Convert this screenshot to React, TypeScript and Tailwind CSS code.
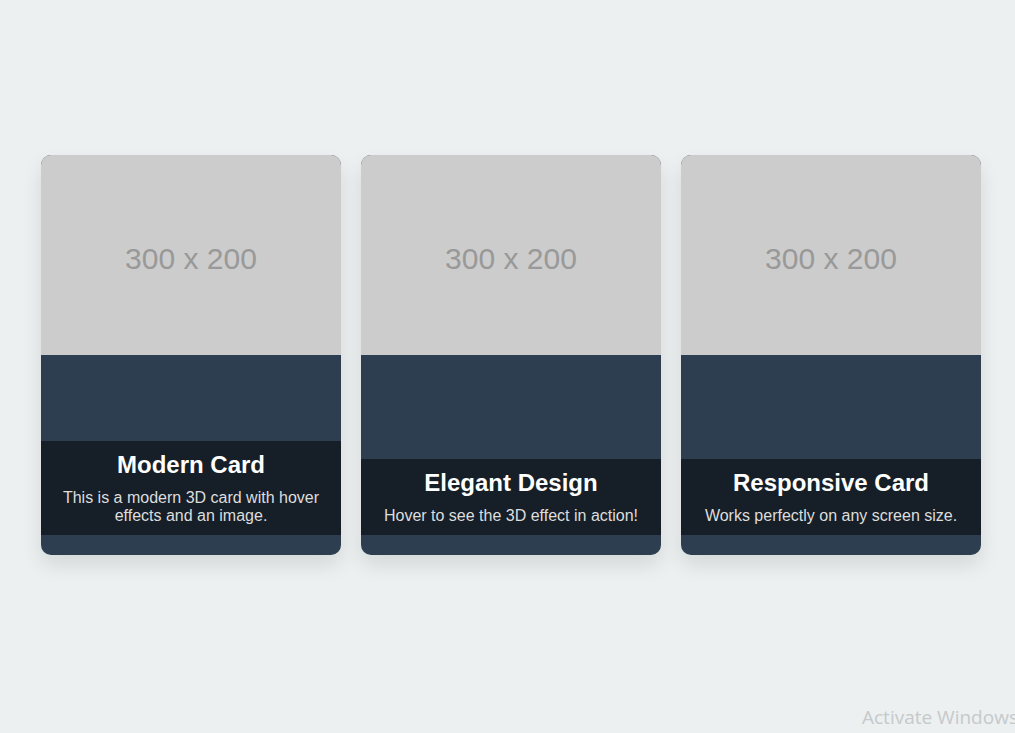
const cards = [
  { title: 'Modern Card', text: 'This is a modern 3D card with hover effects and an image.' },
  { title: 'Elegant Design', text: 'Hover to see the 3D effect in action!' },
  { title: 'Responsive Card', text: 'Works perfectly on any screen size.' },
]

export default function App() {
  return (
    <div
      className="relative h-[733px] overflow-hidden bg-[#ecf0f1]"
      style={{ fontFamily: '"Liberation Sans", Arial, sans-serif' }}
    >
      <div className="flex gap-5 pl-[41px] pt-[155px]">
        {cards.map(card => (
          <div
            key={card.title}
            className="relative h-[400px] w-[300px] overflow-hidden rounded-[10px] bg-[#2c3e50] shadow-[0_10px_20px_rgba(0,0,0,0.1)]"
          >
            <div className="flex h-[200px] items-center justify-center bg-[#cccccc] pt-[6px] text-[30px] text-[#999999]">
              300 x 200
            </div>
            <div className="absolute bottom-[20px] left-0 right-0 bg-[rgba(0,0,0,0.5)] px-[10px] pb-[10px] pt-[10px] text-center">
              <h2 className="mb-[10px] text-[24px] font-bold leading-[28px] text-white">{card.title}</h2>
              <p className="text-[16px] leading-[18px] text-[#dddddd]">{card.text}</p>
            </div>
          </div>
        ))}
      </div>
      <div
        className="absolute left-[862px] top-[703px] whitespace-nowrap text-[19px] text-[#c6c9cb]"
        style={{ fontFamily: '"Open Sans", "Noto Sans", sans-serif' }}
      >
        Activate Windows
      </div>
    </div>
  )
}
